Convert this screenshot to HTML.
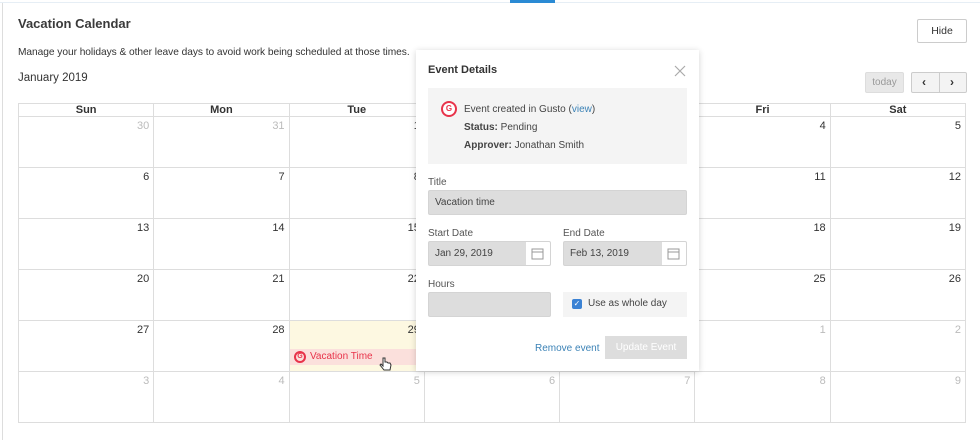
<!DOCTYPE html>
<html><head><style>
*{box-sizing:border-box;margin:0;padding:0}
body{width:980px;height:440px;background:#fff;font-family:"Liberation Sans",sans-serif;color:#333;position:relative;overflow:hidden}
.abs{position:absolute}
table{position:absolute;left:18px;top:103px;border-collapse:collapse;width:948px;table-layout:fixed}
th{height:13px;font-size:11px;border:1px solid #ddd;line-height:12px;font-weight:bold;color:#333}
td{height:51px;border:1px solid #ddd;vertical-align:top;text-align:right;font-size:11px;padding:3px 4px;color:#333}
td.o{color:#bbb}
.pop{left:416px;top:50px;width:283px;height:321px;background:#fff;box-shadow:0 1px 6px rgba(0,0,0,.18);font-size:10px}
.inp{background:#ddd;border:1px solid #d4d4d4;border-radius:2px;height:25px;font-size:10px;line-height:23px;padding-left:6px;color:#444}
.lbl{font-size:10px;color:#555}
</style></head><body>
<div class="abs" style="left:0;top:2px;width:980px;height:1px;background:#e6eef5"></div>
<div class="abs" style="left:510px;top:0;width:45px;height:3px;background:#2a8ad4"></div>
<div class="abs" style="left:2px;top:3px;width:1px;height:437px;background:#ddd"></div>
<div class="abs" style="left:18px;top:16px;font-size:13px;font-weight:bold;color:#3a3a3a">Vacation Calendar</div>
<div class="abs" style="left:18px;top:47px;font-size:10.2px;color:#333;letter-spacing:-0.05px">Manage your holidays &amp; other leave days to avoid work being scheduled at those times.</div>
<div class="abs" style="left:18px;top:72px;font-size:11.5px;color:#333">January 2019</div>
<div class="abs" style="left:917px;top:19px;width:50px;height:24px;border:1px solid #ccc;border-radius:2px;font-size:10.5px;text-align:center;line-height:22px">Hide</div>
<div class="abs" style="left:865px;top:72px;width:39px;height:21px;background:#e8e8e8;border:1px solid #ddd;border-radius:2px;font-size:10px;color:#999;text-align:center;line-height:19px">today</div>
<div class="abs" style="left:911px;top:72px;width:56px;height:21px;background:#f3f3f3;border:1px solid #ccc;border-radius:2px;font-size:12px;font-weight:bold;line-height:19px"><span style="position:absolute;left:10px">&lsaquo;</span><span style="position:absolute;left:27px;top:0;width:1px;height:19px;background:#ccc"></span><span style="position:absolute;left:38px">&rsaquo;</span></div>
<table>
<tr><th>Sun</th><th>Mon</th><th>Tue</th><th>Wed</th><th>Thu</th><th>Fri</th><th>Sat</th></tr>
<tr><td class="o">30</td><td class="o">31</td><td>1</td><td>2</td><td>3</td><td>4</td><td>5</td></tr>
<tr><td>6</td><td>7</td><td>8</td><td>9</td><td>10</td><td>11</td><td>12</td></tr>
<tr><td>13</td><td>14</td><td>15</td><td>16</td><td>17</td><td>18</td><td>19</td></tr>
<tr><td>20</td><td>21</td><td>22</td><td>23</td><td>24</td><td>25</td><td>26</td></tr>
<tr><td>27</td><td>28</td><td style="background:#fdf8e1">29</td><td>30</td><td>31</td><td class="o">1</td><td class="o">2</td></tr>
<tr><td class="o">3</td><td class="o">4</td><td class="o">5</td><td class="o">6</td><td class="o">7</td><td class="o">8</td><td class="o">9</td></tr>
</table>
<div class="abs" style="left:290px;top:349px;width:130px;height:16px;background:#fbe0dc;color:#e8334a;font-size:10px;line-height:16px;padding-left:20px">Vacation Time
<span style="position:absolute;left:4px;top:2px;width:12px;height:12px;border:2px solid #e8334a;border-radius:50%;font-size:7px;line-height:8px;text-align:center;font-weight:bold">G</span></div>
<div class="abs pop">
<div class="abs" style="left:12px;top:14px;font-size:11px;font-weight:bold;color:#333">Event Details</div>
<svg class="abs" style="left:258px;top:15px" width="12" height="12" viewBox="0 0 12 12"><path d="M1 1L11 11M11 1L1 11" stroke="#aaa" stroke-width="1.2"/></svg>
<div class="abs" style="left:12px;top:38px;width:259px;height:76px;background:#f4f4f4"></div>
<div class="abs" style="left:25px;top:51px;width:16px;height:16px;border-radius:50%;background:#e8334a"><div style="position:absolute;left:2px;top:2px;width:12px;height:12px;border-radius:50%;background:#fff;color:#e8334a;font-size:8px;font-weight:bold;text-align:center;line-height:12px">G</div></div>
<div class="abs" style="left:48px;top:54px;color:#444">Event created in Gusto (<span style="color:#3b82b6">view</span>)</div>
<div class="abs" style="left:48px;top:72px;color:#444"><b>Status:</b> Pending</div>
<div class="abs" style="left:48px;top:90px;color:#444"><b>Approver:</b> Jonathan Smith</div>
<div class="abs lbl" style="left:12px;top:127px">Title</div>
<div class="abs inp" style="left:12px;top:140px;width:259px">Vacation time</div>
<div class="abs lbl" style="left:12px;top:178px">Start Date</div>
<div class="abs inp" style="left:12px;top:191px;width:123px;background:linear-gradient(90deg,#ddd 97px,#fff 97px)">Jan 29, 2019</div>
<div class="abs lbl" style="left:147px;top:178px">End Date</div>
<div class="abs inp" style="left:147px;top:191px;width:124px;background:linear-gradient(90deg,#ddd 98px,#fff 98px)">Feb 13, 2019</div>
<svg class="abs" style="left:115px;top:197px" width="13" height="13" viewBox="0 0 13 13"><rect x="1" y="2" width="11" height="10" fill="none" stroke="#999"/><line x1="1" y1="5" x2="12" y2="5" stroke="#999"/></svg>
<svg class="abs" style="left:251px;top:197px" width="13" height="13" viewBox="0 0 13 13"><rect x="1" y="2" width="11" height="10" fill="none" stroke="#999"/><line x1="1" y1="5" x2="12" y2="5" stroke="#999"/></svg>
<div class="abs lbl" style="left:12px;top:229px">Hours</div>
<div class="abs inp" style="left:12px;top:242px;width:123px"></div>
<div class="abs" style="left:147px;top:242px;width:124px;height:25px;background:#f4f4f4"></div>
<div class="abs" style="left:156px;top:249px;width:10px;height:10px;background:#3b82d4;border-radius:2px;color:#fff;font-size:8px;line-height:10px;text-align:center">&#x2713;</div>
<div class="abs" style="left:172px;top:248px;color:#444">Use as whole day</div>
<div class="abs" style="left:119px;top:293px;color:#3b82b6">Remove event</div>
<div class="abs" style="left:189px;top:286px;width:82px;height:23px;background:#ddd;color:#fff;text-align:center;line-height:23px">Update Event</div>
</div>
<svg class="abs" style="left:379px;top:357px" width="14" height="14" viewBox="0 0 14 14"><path d="M4 1v8l-2-2-1 1 4 5h6l1-5-1-2-2 0-1-1-2 0V1z" fill="#fff" stroke="#333" stroke-width="1"/></svg>
</body></html>
